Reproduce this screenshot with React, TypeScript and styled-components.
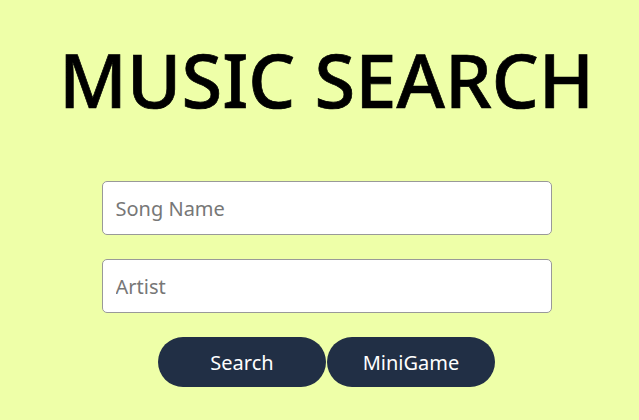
import React from "react";
import styled, { createGlobalStyle } from "styled-components";

const Global = createGlobalStyle`
  html, body {
    margin: 0;
    padding: 0;
    background: #eeffa8;
    font-family: "Noto Sans", "Open Sans", sans-serif;
  }
`;

const Page = styled.main`
  display: flex;
  flex-direction: column;
  align-items: center;
  min-height: 420px;
  padding: 35px 0 0 14px;
  box-sizing: border-box;
`;

const Title = styled.h1`
  margin: 0;
  font-size: 74px;
  font-weight: 500;
  line-height: 90px;
  color: #000;
  -webkit-text-stroke: 0.7px #000;
`;

const Form = styled.form`
  display: flex;
  flex-direction: column;
  align-items: center;
  gap: 24px;
  margin-top: 56px;
`;

const Input = styled.input`
  box-sizing: border-box;
  width: 450px;
  height: 54px;
  border: 1px solid #999;
  border-radius: 5px;
  background: #fff;
  padding: 0 13px;
  font-family: inherit;
  font-size: 20px;
  color: #333;
  outline: none;
  &::placeholder {
    color: #777;
  }
`;

const Buttons = styled.div`
  display: flex;
  gap: 1px;
`;

const Button = styled.button`
  width: 168px;
  height: 50px;
  border: none;
  border-radius: 25px;
  background: #212f45;
  color: #fff;
  font-family: inherit;
  font-size: 20px;
  cursor: pointer;
`;

export default function App() {
  return (
    <>
      <Global />
      <Page>
        <Title>MUSIC SEARCH</Title>
        <Form onSubmit={(e) => e.preventDefault()}>
          <Input placeholder="Song Name" />
          <Input placeholder="Artist" />
          <Buttons>
            <Button type="submit">Search</Button>
            <Button type="button">MiniGame</Button>
          </Buttons>
        </Form>
      </Page>
    </>
  );
}
